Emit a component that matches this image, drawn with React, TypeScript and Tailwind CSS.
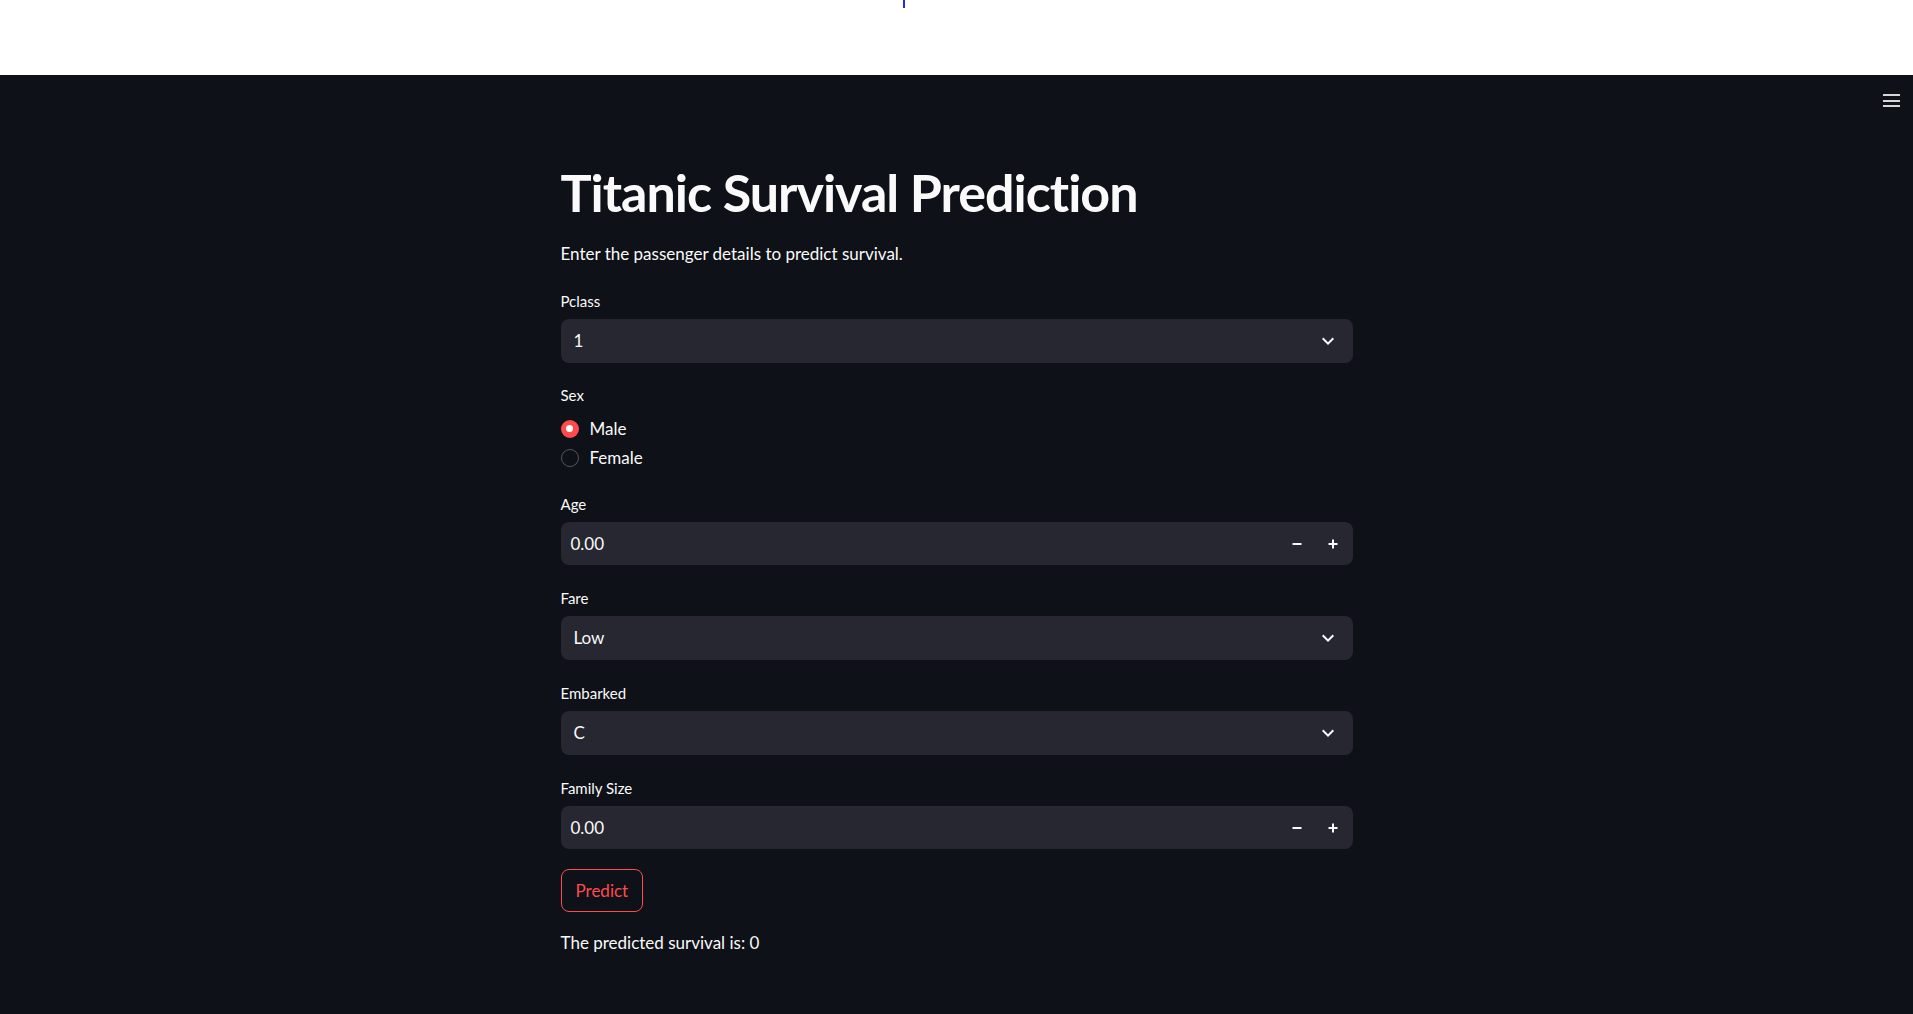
import React from 'react';

const Chevron: React.FC = () => (
  <svg width="24" height="24" viewBox="0 0 24 24" fill="#fafafa">
    <path d="M7.41 8.59L12 13.17l4.59-4.58L18 10l-6 6-6-6 1.41-1.41z" />
  </svg>
);

const Label: React.FC<{ text: string }> = ({ text }) => (
  <div className="h-[22px] leading-[22px] text-[15px] text-[#fafafa]">{text}</div>
);

const SelectBox: React.FC<{ label: string; value: string; mt: string }> = ({ label, value, mt }) => (
  <div className={mt}>
    <Label text={label} />
    <div className="mt-[7px] h-[44px] rounded-[8px] bg-[#262730] flex items-center justify-between pl-[13px] pr-[13px]">
      <span className="text-[17px] text-[#fafafa]">{value}</span>
      <Chevron />
    </div>
  </div>
);

const NumberBox: React.FC<{ label: string; value: string; mt: string }> = ({ label, value, mt }) => (
  <div className={mt}>
    <Label text={label} />
    <div className="mt-[7px] h-[43px] rounded-[8px] bg-[#262730] flex items-center pr-[2px]">
      <span className="flex-1 pl-[10px] text-[17px] text-[#fafafa]">{value}</span>
      <button className="w-[36px] h-full flex items-center justify-center">
        <svg width="10" height="10" viewBox="0 0 10 10">
          <rect x="0.5" y="4" width="9" height="2" fill="#fafafa" />
        </svg>
      </button>
      <button className="w-[36px] h-full flex items-center justify-center rounded-r-[8px]">
        <svg width="10" height="10" viewBox="0 0 10 10">
          <rect x="0.5" y="4" width="9" height="2" fill="#fafafa" />
          <rect x="4" y="0.5" width="2" height="9" fill="#fafafa" />
        </svg>
      </button>
    </div>
  </div>
);

export default function App() {
  return (
    <div className="font-['Lato',sans-serif] min-h-screen bg-[#0e1117]">
      {/* white strip left above the app */}
      <div className="h-[75px] bg-white">
        <div className="ml-[903px] w-[2px] h-[8px] bg-[#2a2ae6]" />
      </div>

      <div className="relative pt-[85px] pb-[80px]">
        <div className="absolute right-[13px] top-[19px] flex flex-col gap-[3.5px]">
          <div className="w-[17px] h-[2px] bg-[#d6d6d6]" />
          <div className="w-[17px] h-[2px] bg-[#d6d6d6]" />
          <div className="w-[17px] h-[2px] bg-[#d6d6d6]" />
        </div>

        <div className="w-[792px] mx-auto flex flex-col">
          <h1 className="text-[52px] leading-[64px] font-bold text-[#fafafa] tracking-[-1px]">
            Titanic Survival Prediction
          </h1>
          <p className="mt-[18px] text-[17px] leading-[24px] text-[#fafafa]">
            Enter the passenger details to predict survival.
          </p>

          <SelectBox label="Pclass" value="1" mt="mt-[24px]" />

          <div className="mt-[21px]">
            <Label text="Sex" />
            <div className="mt-[8px] flex flex-col">
              <div className="h-[29px] flex items-center gap-[11px]">
                <span className="w-[18px] h-[18px] rounded-full bg-[#ff4b4b] flex items-center justify-center">
                  <span className="w-[7px] h-[7px] rounded-full bg-white" />
                </span>
                <span className="text-[17px] text-[#fafafa]">Male</span>
              </div>
              <div className="h-[29px] flex items-center gap-[11px]">
                <span className="w-[18px] h-[18px] rounded-full border border-[#53555c]" />
                <span className="text-[17px] text-[#fafafa]">Female</span>
              </div>
            </div>
          </div>

          <NumberBox label="Age" value="0.00" mt="mt-[21px]" />
          <SelectBox label="Fare" value="Low" mt="mt-[22px]" />
          <SelectBox label="Embarked" value="C" mt="mt-[22px]" />
          <NumberBox label="Family Size" value="0.00" mt="mt-[22px]" />

          <div className="mt-[20px]">
            <button className="h-[43px] px-[14px] rounded-[8px] border border-[#ff4b4b] text-[17px] text-[#ff4b4b]">
              Predict
            </button>
          </div>

          <p className="mt-[19px] text-[17px] leading-[24px] text-[#fafafa]">
            The predicted survival is: 0
          </p>
        </div>
      </div>
    </div>
  );
}
